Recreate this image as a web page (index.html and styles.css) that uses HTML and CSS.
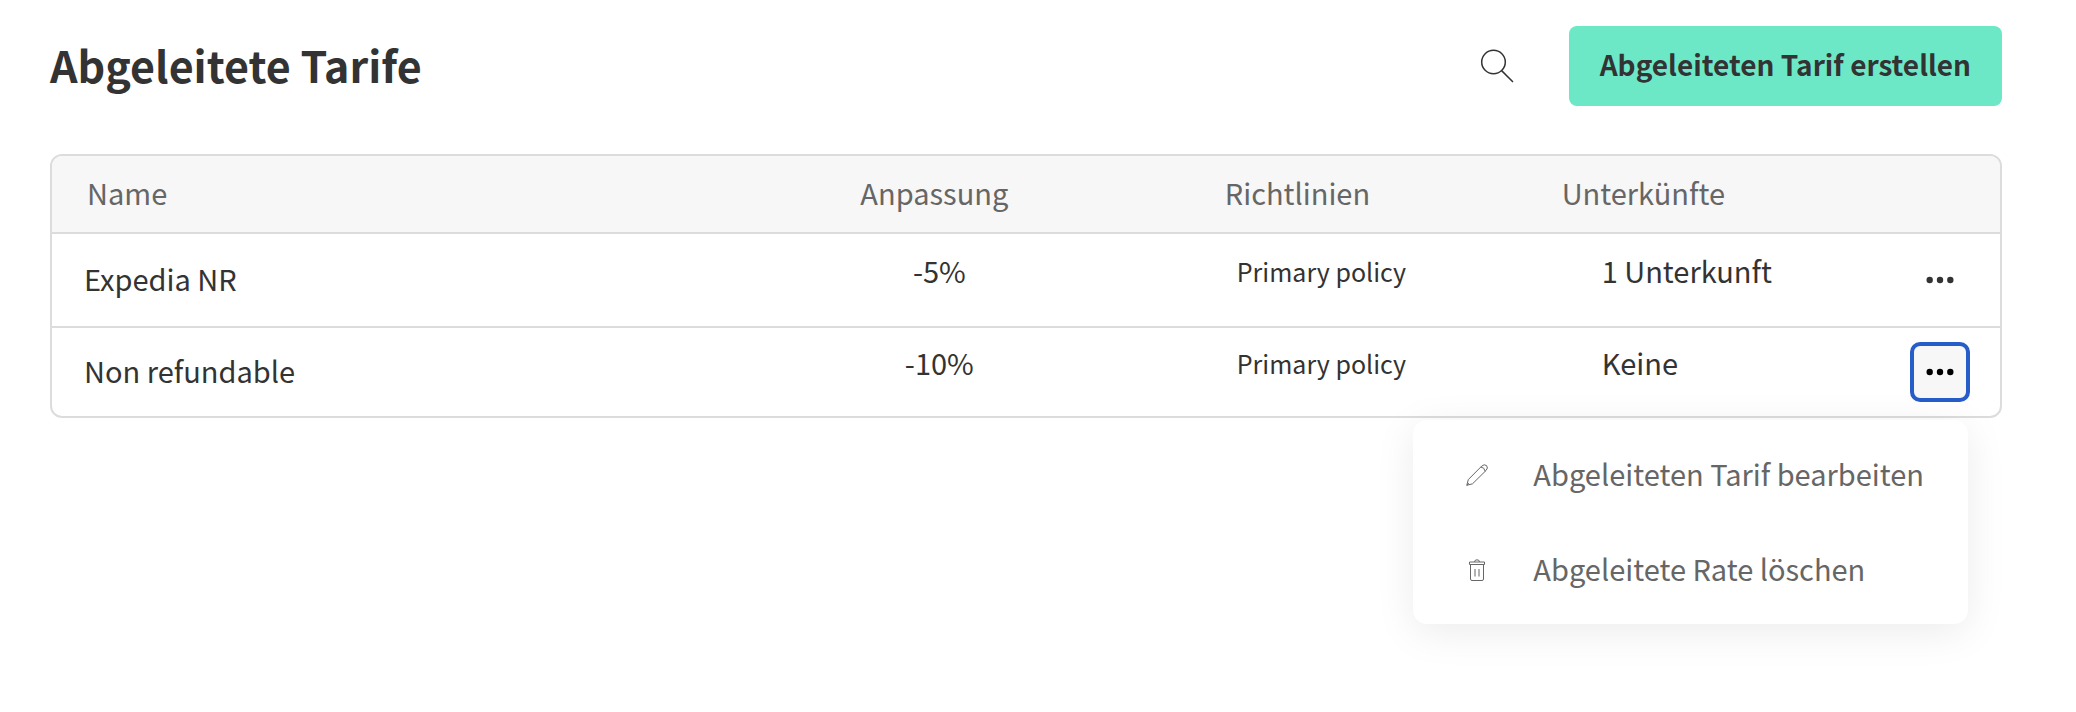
FILE: index.html
```html
<!DOCTYPE html>
<html lang="de">
<head>
    <meta charset="UTF-8">
    <meta name="viewport" content="width=device-width, initial-scale=1.0">
    <title>Abgeleitete Tarife</title>
    <link rel="stylesheet" href="styles.css">
</head>
<body>
    <div class="header">
        <h1>Abgeleitete Tarife</h1>
        <button type="button" class="search-button" aria-label="Suchen">
            <svg width="34" height="34" viewBox="0 0 34 34">
                <circle cx="13.5" cy="13" r="11.8"></circle>
                <path d="M21.6 21.6L33 33"></path>
            </svg>
        </button>
        <button type="button" class="button">Abgeleiteten Tarif erstellen</button>
    </div>
    <table class="rates">
        <thead>
            <tr>
                <th class="name">Name</th>
                <th class="adjustment">Anpassung</th>
                <th class="policy">Richtlinien</th>
                <th class="units">Unterkünfte</th>
                <th class="actions"></th>
            </tr>
        </thead>
        <tbody>
            <tr>
                <td class="name">Expedia NR</td>
                <td class="adjustment">-5%</td>
                <td class="policy">Primary policy</td>
                <td class="units">1 Unterkunft</td>
                <td class="actions">
                    <div class="dropdown">
                        <button type="button" class="more" aria-label="Aktionen">
                            <svg width="28" height="8" viewBox="0 0 28 8">
                                <circle cx="3.7" cy="4" r="3.2"></circle>
                                <circle cx="14" cy="4" r="3.2"></circle>
                                <circle cx="24.3" cy="4" r="3.2"></circle>
                            </svg>
                        </button>
                    </div>
                </td>
            </tr>
            <tr>
                <td class="name">Non refundable</td>
                <td class="adjustment">-10%</td>
                <td class="policy">Primary policy</td>
                <td class="units">Keine</td>
                <td class="actions">
                    <div class="dropdown">
                        <button type="button" class="more active" aria-label="Aktionen" aria-expanded="true">
                            <svg width="28" height="8" viewBox="0 0 28 8">
                                <circle cx="3.7" cy="4" r="3.2"></circle>
                                <circle cx="14" cy="4" r="3.2"></circle>
                                <circle cx="24.3" cy="4" r="3.2"></circle>
                            </svg>
                        </button>
                        <div class="menu">
                            <button type="button" class="menu-item">
                                <svg width="24" height="24" viewBox="0 0 24 24">
                                    <path d="M1.8 22.3L3.3 16.6L16.7 3.1Q19.3 .7 21.6 2.6Q23.5 4.9 21 7.5L7.5 20.8Z"></path>
                                    <path d="M15.8 4Q19.6 4.4 20.1 8.3M1.8 22.3L4 20.2"></path>
                                </svg>
                                <span>Abgeleiteten Tarif bearbeiten</span>
                            </button>
                            <button type="button" class="menu-item">
                                <svg width="24" height="24" viewBox="0 0 24 24">
                                    <path d="M4.5 4H19.5V6.5H4.5Z"></path>
                                    <path d="M9.5 4Q9.5 1.8 12 1.8Q14.5 1.8 14.5 4"></path>
                                    <path d="M5.5 6.5V21Q5.5 22.5 7 22.5H17Q18.5 22.5 18.5 21V6.5"></path>
                                    <path d="M10 11V18.5M14 11V18.5"></path>
                                </svg>
                                <span>Abgeleitete Rate löschen</span>
                            </button>
                        </div>
                    </div>
                </td>
            </tr>
        </tbody>
    </table>
</body>
</html>
```
FILE: styles.css
```css
* {
    box-sizing: border-box;
}
body {
    min-height: 100vh;
    margin: 0;
    padding: 26px 74px 40px 50px;
    background-color: #fff;
    color: #333;
    font-family: "Noto Sans CJK SC", "Noto Sans", sans-serif;
    font-size: 29px;
    line-height: 40px;
}
button {
    margin: 0;
    padding: 0;
    border: none;
    background: none;
    color: inherit;
    font: inherit;
    cursor: pointer;
}
svg {
    display: block;
    flex: none;
}
.header {
    display: flex;
    align-items: center;
    margin-bottom: 48px;
}
h1 {
    flex: 1;
    margin: 0;
    padding-bottom: 4px;
    font-size: 43px;
    line-height: 60px;
    font-weight: 700;
}
.search-button {
    margin-right: 55px;
}
.search-button svg {
    fill: none;
    stroke: #333;
    stroke-width: 1.5;
}
.button {
    padding: 18px 31px 22px;
    border-radius: 8px;
    background-color: #6de8c7;
    font-size: 28px;
    font-weight: 600;
}
.rates {
    width: 100%;
    table-layout: fixed;
    border: 2px solid #dcdcdc;
    border-radius: 12px;
    border-collapse: separate;
    border-spacing: 0;
}
th, td {
    padding: 0;
    text-align: left;
    white-space: nowrap;
}
th {
    height: 78px;
    padding-bottom: 4px;
    border-bottom: 2px solid #dcdcdc;
    background-color: #f7f7f7;
    color: #666;
    font-weight: 400;
}
th:first-child {
    border-top-left-radius: 10px;
}
th:last-child {
    border-top-right-radius: 10px;
}
td {
    height: 88px;
    padding-bottom: 20px;
}
tbody tr:first-child td {
    height: 94px;
    border-bottom: 2px solid #dcdcdc;
}
th.name {
    width: 31%;
    padding-left: 35px;
}
th.adjustment {
    width: 29%;
    padding-right: 8px;
    text-align: center;
}
th.policy {
    width: 17.5%;
    padding-left: 4px;
}
th.actions {
    width: 120px;
}
td.name {
    padding-left: 32px;
    padding-bottom: 4px;
}
td.adjustment {
    padding-left: 2px;
    text-align: center;
}
td.policy {
    padding-left: 16px;
    padding-bottom: 18px;
    font-size: 25px;
}
td.units {
    padding-left: 40px;
}
td.actions {
    padding-right: 30px;
    padding-bottom: 0;
}
.dropdown {
    position: relative;
    width: 60px;
    margin-left: auto;
}
.more {
    display: flex;
    align-items: center;
    justify-content: center;
    width: 60px;
    height: 60px;
    border: 4px solid transparent;
    border-radius: 10px;
}
.more svg {
    fill: #333;
}
.more.active {
    border-color: #265dc9;
    background-color: #f7f7f7;
}
.more.active svg {
    fill: #000;
}
.menu {
    position: absolute;
    top: 78px;
    right: 2px;
    padding: 7px 0;
    border-radius: 14px;
    background-color: #fff;
    box-shadow: 0 8px 40px rgba(0,0,0,0.08);
}
.menu-item {
    display: flex;
    align-items: center;
    gap: 44px;
    width: 100%;
    height: 95px;
    padding: 0 44px 0 52px;
    color: #666;
    white-space: nowrap;
}
.menu-item span {
    padding-bottom: 4px;
}
.menu-item svg {
    fill: none;
    stroke: #666;
    stroke-width: 1;
}
```
